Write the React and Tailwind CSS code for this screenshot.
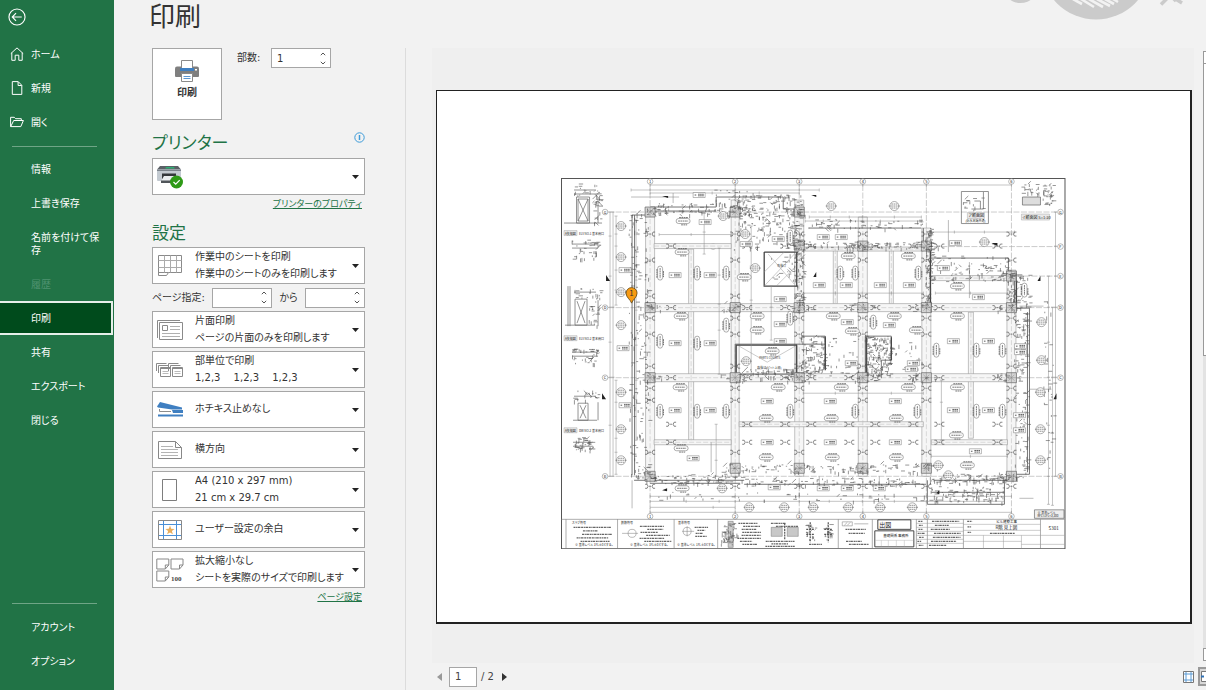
import { useState } from 'react'

const PRIMARY_NAV = [
  { label: 'ホーム', icon: 'home' },
  { label: '新規', icon: 'file' },
  { label: '開く', icon: 'folder' },
]

const SECONDARY_NAV = [
  { label: '情報' },
  { label: '上書き保存' },
  { label: '名前を付けて保存', tall: true },
  { label: '履歴', disabled: true },
  { label: '印刷' },
  { label: '共有' },
  { label: 'エクスポート' },
  { label: '閉じる' },
]

const SETTINGS = [
  { id: 'sides', icon: 'oneSided', title: '片面印刷', note: 'ページの片面のみを印刷します' },
  { id: 'collate', icon: 'collate', title: '部単位で印刷', note: '1,2,3\u3000 1,2,3\u3000 1,2,3' },
  { id: 'staple', icon: 'staple', title: 'ホチキス止めなし' },
  { id: 'orientation', icon: 'landscape', title: '横方向' },
  { id: 'paper', icon: 'paper', title: 'A4 (210 x 297 mm)', note: '21 cm x 29.7 cm' },
  { id: 'margins', icon: 'margins', title: 'ユーザー設定の余白' },
  { id: 'scaling', icon: 'scaling', title: '拡大縮小なし', note: 'シートを実際のサイズで印刷します' },
]

/* ---------- icons ---------- */

function NavIcon({ name }) {
  return (
    <svg width="14" height="14" viewBox="0 0 14 14" fill="none" stroke="white" strokeWidth="1" className="shrink-0">
      {name === 'home' && <path d="M.8 6.6 7 .9l6.200 5.700M1.800 5.800v7.500h3.400V8.200h3.600v5.100h3.400V5.800" />}
      {name === 'file' && <path d="M2.300.6h5.900l3.600 3.700v9.100H2.300zM8.100.8v3.700h3.600" />}
      {name === 'folder' && <path d="M.6 11.600V2.300h3.700l1.300 1.400h5.700v1.800M.7 11.600l3-6.100h9.700l-2.600 6.100z" />}
    </svg>
  )
}

function SheetIcon() {
  return (
    <svg width="26" height="24" viewBox="0 0 26 24" fill="none" stroke="#8a8a8a">
      <path d="M1.500 1.500h23v17h-13l-2 3h-8zM1.500 18.500h10" />
      <path d="M1.500 6.500h23M1.500 13.500h23M7.500 1.500v17M13.500 1.500v17M19.500 1.500v17" stroke="#ababab" />
    </svg>
  )
}

function OneSidedIcon() {
  return (
    <svg width="28" height="22" viewBox="0 0 28 22" fill="none" stroke="#8a8a8a">
      <path d="M1.500 19V1.500H24" />
      <path d="M3.500 3.500h23v17h-23z" fill="white" />
      <path d="M6.500 6.500h5v5h-5z" />
      <path d="M14 7.500h10M14 10.500h10M6 14.500h18M6 17.500h18" stroke="#b0b0b0" />
    </svg>
  )
}

function CollateIcon() {
  return (
    <svg width="28" height="16" viewBox="0 0 28 16" fill="white" stroke="#8a8a8a">
      {[0, 12].map((x) => (
        <g key={x} transform={`translate(${x} 0)`}>
          <path d="M.5 9V1.500h10M2.500 11V3.500h10" fill="none" />
          <path d="M4.500 5.500h10v9h-10z" />
          <path d="M5 6.500h9" />
          <path d="M6.500 9.500h6M6.500 11.500h6" stroke="#bbb" />
        </g>
      ))}
    </svg>
  )
}

function StapleIcon() {
  return (
    <svg width="28" height="18" viewBox="0 0 28 18">
      <path d="M1 5.500 4 1l22 5.500v2H16L2 6.500z" fill="#3f7fc1" />
      <path d="M3.500 8v2.500H15" fill="none" stroke="#8c8c8c" />
      <path d="M16 9h11v3H17z" fill="#3f7fc1" />
      <path d="M2 13.500h25v2H2z" fill="#3f7fc1" />
    </svg>
  )
}

function LandscapeIcon() {
  return (
    <svg width="26" height="20" viewBox="0 0 26 20" fill="none" stroke="#888">
      <path d="M1.500 1.500h17l6 6v11h-23zM18.500 1.500v6h6" />
      <path d="M4 6.500h12M4 9.500h17M4 12.500h17M4 15.500h17" stroke="#b4b4b4" />
    </svg>
  )
}

function PaperIcon() {
  return (
    <svg width="26" height="22" viewBox="0 0 26 22" fill="white" stroke="#7d7d7d">
      <path d="M5.500.5h14v21h-14z" />
    </svg>
  )
}

function MarginsIcon() {
  return (
    <svg width="26" height="22" viewBox="0 0 26 22" fill="none">
      <path d="M1.500 1.500h23v19h-23z" fill="white" stroke="#888" />
      <path d="M6.500 2v18M19.500 2v18M2 5.500h22M2 16.500h22" stroke="#4a8fd6" />
      <path d="m13 6.500 1.200 3.300 3.400.1-2.700 2.100 1 3.300-2.900-1.900-2.900 1.900 1-3.300-2.700-2.100 3.400-.1z" fill="#e9ae5c" />
    </svg>
  )
}

function ScalingIcon() {
  return (
    <svg width="28" height="24" viewBox="0 0 28 24" fill="white" stroke="#888">
      <path d="M.8 1h12v6l-3.500 4H.8zM9.300 11V7h3.500" />
      <path d="M15 1h12v6l-3.500 4H15zM23.500 11V7H27" />
      <path d="M.8 13h12v6l-3.500 4H.8zM9.300 23v-4h3.500" />
      <text x="15" y="22.500" fontSize="7" fontWeight="bold" fill="#444" stroke="none" className="font-['Liberation_Serif',serif]">100</text>
    </svg>
  )
}

function PrinterIcon() {
  return (
    <svg width="24" height="22" viewBox="0 0 24 22">
      <path d="M0 8.500Q0 6.500 2 6.500h20q2 0 2 2V16q0 1-1 1H1q-1 0-1-1z" fill="#7f7f7f" />
      <path d="M6.500.5h11V9h-11z" fill="white" stroke="#8a8a8a" />
      <path d="M5 8h14v3H5z" fill="#3f7fc1" />
      <path d="M6.500 13.500h11v8h-11z" fill="white" stroke="#8a8a8a" />
      <path d="M8.500 16.500h7M8.500 18.500h7" stroke="#5c97d3" />
      <path d="M20 9h2v1.500h-2z" fill="white" />
    </svg>
  )
}

function DeviceIcon() {
  return (
    <svg width="28" height="24" viewBox="0 0 28 24">
      <path d="M4 1h18l3 3.500H1z" fill="#5b6066" />
      <path d="M10 2h8l.8 1.500H9.200z" fill="#2fae73" />
      <path d="M1 4.500h24V15q0 1-1 1H2q-1 0-1-1z" fill="#c3cad1" />
      <path d="M1 4.500h24V6H1z" fill="#7b838b" />
      <path d="M6 8.500h14v6H6z" fill="#33373b" />
      <path d="m8 11-3 5h14l-1-5z" fill="#e9edf0" />
      <path d="M5 15.500h14V18H5z" fill="#50555a" />
      <circle cx="20.500" cy="17" r="6.500" fill="#2f9a17" />
      <path d="m17.500 17 2.200 2.200 4-4" fill="none" stroke="white" strokeWidth="1.200" />
    </svg>
  )
}

const ICONS = {
  sheet: SheetIcon,
  oneSided: OneSidedIcon,
  collate: CollateIcon,
  staple: StapleIcon,
  landscape: LandscapeIcon,
  paper: PaperIcon,
  margins: MarginsIcon,
  scaling: ScalingIcon,
  device: DeviceIcon,
}

/* ---------- form parts ---------- */

function Combo({ id, icon, title, note, label }) {
  const Icon = ICONS[icon]
  return (
    <div className="flex h-[37px] min-w-0 items-center border border-[#a6a6a6] bg-white pr-[5px]">
      <div className="flex w-[34px] shrink-0 justify-center">
        <Icon />
      </div>
      <div className="flex min-w-0 flex-1 flex-col pb-[2px] pl-2">
        <select
          id={id}
          aria-label={label || title}
          className="h-[17px] w-full appearance-none bg-transparent text-[10px] leading-[17px] text-[#333] outline-none"
        >
          <option>{title}</option>
        </select>
        {note && <p className="h-[17px] leading-[17px] whitespace-nowrap">{note}</p>}
      </div>
      <svg width="7" height="4" viewBox="0 0 7 4" className="shrink-0">
        <path d="M0 0h7L3.500 4z" fill="#222" />
      </svg>
    </div>
  )
}

function Spinner({ id, value, onChange, label }) {
  const step = (d) => onChange(String(Math.max(1, (Number(value) || 0) + d)))
  return (
    <div className="flex h-[20px] w-[60px] shrink-0 border border-[#a6a6a6] bg-white">
      <input
        id={id}
        value={value}
        aria-label={label}
        inputMode="numeric"
        onChange={(e) => onChange(e.target.value)}
        className="w-full min-w-0 flex-1 bg-transparent pl-[5px] text-[10px] outline-none"
      />
      <div className="flex w-[14px] flex-col">
        <button aria-label="増やす" onClick={() => step(1)} className="flex flex-1 items-center justify-center">
          <svg width="6" height="4" viewBox="0 0 6 4" fill="none" stroke="#555"><path d="M.8 3.200 3 1l2.200 2.200" /></svg>
        </button>
        <button aria-label="減らす" onClick={() => step(-1)} className="flex flex-1 items-center justify-center">
          <svg width="6" height="4" viewBox="0 0 6 4" fill="none" stroke="#555"><path d="M.8.8 3 3 5.200.8" /></svg>
        </button>
      </div>
    </div>
  )
}

/* ---------- floor plan ---------- */

const AXIS_X = [651, 736, 800, 863.5, 927, 1012]
const AXIS_Y = [['G', 212], ['F', 246.5], ['E', 276], ['D', 307.5], ['C', 377.5], ['B', 476]]

// small fixed-seed generator so the detail marks stay put between renders
function seeded(seed) {
  let s = seed
  return () => {
    s = (s * 16807) % 2147483647
    return s / 2147483647
  }
}

function scatter(x, y, w, h, n, seed) {
  const rnd = seeded(seed)
  let d = ''
  for (let i = 0; i < n; i++) {
    const px = (x + rnd() * w).toFixed(1)
    const py = (y + rnd() * h).toFixed(1)
    const len = (1 + rnd() * 3.5).toFixed(1)
    const k = rnd()
    if (k < 0.5) d += `M${px} ${py}h${len}`
    else if (k < 0.93) d += `M${px} ${py}v${len}`
    else d += `M${px} ${py}l${len} ${k < 0.96 ? len : -len}`
  }
  return d
}

// rows of ruled annotation with uneven line ends
function rows(x, y, w, h, gap, seed) {
  const rnd = seeded(seed)
  let d = ''
  for (let py = y; py < y + h; py += gap) {
    const a = rnd() * w * 0.25
    d += `M${(x + a).toFixed(1)} ${py}h${((w - a) * (0.5 + rnd() * 0.5)).toFixed(1)}`
  }
  return d
}

// dimension line with tick marks
const dimH = (y, xs) => `M${xs[0]} ${y}H${xs[xs.length - 1]}` + xs.map((x) => `M${x} ${y - 1.5}v3`).join('')
const dimV = (x, ys) => `M${x} ${ys[0]}V${ys[ys.length - 1]}` + ys.map((y) => `M${x - 1.5} ${y}h3`).join('')

// [x, y1, y2, half width]
const BEAMS_V = [
  [651, 212, 476, 4.5], [736, 200, 476, 4], [800, 200, 476, 4.5], [863.5, 217, 476, 4.5],
  [927, 228, 476, 4.5], [1012, 270, 476, 4.5],
  [692, 249, 440, 2.5], [836, 249, 304, 2], [892, 249, 304, 2], [971.5, 312, 438, 2.5],
]
// [y, x1, x2, half width]
const BEAMS_H = [
  [307.5, 651, 1012, 4], [377.5, 651, 1012, 4], [246, 655, 732, 2.5], [249, 804, 924, 2],
  [278, 932, 1008, 2.5], [424, 740, 924, 2.5], [442, 655, 732, 2.5], [442, 932, 1008, 2.5],
]

const WALLS = [
  'M651 207H717M651 211H717M717 207v-10H784v12H805',
  'M633 215V475M635.500 215V475M633 215h14M635 480H745M651 483H741',
  'M810 228H922M924 228v18M932 258H1009V272M1015 272V308H1030V474H1012',
  'M745 484H927M928 480v24H1005V480M935 480H1010M932 492H1005',
  'M1028 312V472M736 344V374M736 344H826M797 344V374H738',
  'M826 336V368M802 336H826V342M866 336V378M866 336H892V360H882V378',
]
const HEAVY = [
  'M797.500 252V286M765 252H799M765 252V286H799M931 249V303M737 345V374M797.500 345V374',
  'M736.500 345H798M826 337V370M867 337V376M892 337V360M1017 280V308',
]

const NODES = [
  [651, 212], [736, 212], [800, 212], [800, 245], [863.5, 246], [927, 246], [1012, 276],
  [651, 307.5], [736, 307.5], [800, 307.5], [863.5, 307.5], [927, 307.5], [1012, 307.5],
  [651, 377.5], [736, 377.5], [800, 377.5], [863.5, 377.5], [927, 377.5], [1012, 377.5],
  [651, 476], [736, 468], [800, 468], [863.5, 468], [927, 468], [1012, 476],
]

const TAGS = [
  [706, 222], [676, 275], [711, 275], [676, 343], [711, 343], [676, 410], [711, 410], [694, 458],
  [747, 244], [779, 239], [781, 299], [781, 324], [781, 341], [768, 401], [768, 442],
  [820, 285], [847, 285], [881, 285], [910, 285], [848, 322], [890, 325], [831, 401], [896, 401],
  [831, 442], [896, 442], [979, 297], [954, 341], [989, 341], [954, 410], [989, 410], [976, 451],
  [824, 237], [842, 237], [956, 243], [944, 268], [1021, 346], [1021, 352], [1020, 415], [1020, 430],
  [626, 270], [624, 348], [626, 405], [824, 488], [848, 488], [880, 488], [775, 487], [700, 195],
  [852, 363], [914, 363], [912, 369],
]

const OVALS_H = [
  [684, 221], [683, 252], [682, 316], [681, 387], [682, 448], [683, 488], [745, 277], [758, 316],
  [758, 330], [779, 387], [767, 418], [767, 457], [832, 418], [833, 457], [897, 418], [897, 457],
  [849, 256], [909, 256], [834, 316], [895, 316], [958, 286], [958, 316], [958, 387], [957, 435],
  [968, 465], [842, 387], [909, 387], [773, 351], [917, 330], [853, 331],
]

const OVALS_V = [
  [661, 273], [698, 273], [727, 273], [661, 341], [698, 343], [727, 325], [661, 411], [698, 411],
  [727, 411], [791, 411], [856, 411], [918, 411], [841, 273], [856, 273], [919, 273], [977, 350],
  [1003, 350], [977, 411], [1003, 411], [791, 237], [791, 318], [874, 322], [937, 350], [1025, 290],
]

const RINGS = [
  [622, 226], [622, 257], [622, 292], [622, 325], [622, 392], [622, 429], [622, 460],
  [746, 234], [756, 268], [724, 216], [723, 488], [747, 361], [832, 206], [895, 206], [985, 242],
  [1042, 322], [1042, 360], [1041, 392], [1041, 429], [1041, 460], [939, 465], [949, 475],
  [750, 507], [785, 507], [814, 507], [849, 507], [881, 507], [913, 507],
]

const CLUSTERS = [
  // along the upper walls
  [655, 203, 80, 12, 70], [738, 195, 64, 34, 170], [715, 190, 40, 20, 40], [804, 219, 120, 10, 60], [806, 242, 118, 6, 60],
  [932, 256, 78, 26, 90], [735, 225, 66, 24, 50], [770, 254, 26, 30, 20],
  // left and right edges
  [630, 214, 20, 90, 60], [630, 312, 20, 64, 40], [630, 384, 20, 92, 60], [1008, 272, 22, 36, 70],
  [1014, 312, 16, 62, 70], [1014, 392, 16, 84, 55], [1044, 300, 10, 170, 40],
  // core rooms
  [738, 368, 62, 10, 60], [800, 336, 26, 40, 110], [866, 336, 26, 40, 170], [828, 336, 32, 40, 30], [896, 340, 28, 34, 20],
  [795, 225, 10, 80, 90], [926, 228, 7, 76, 90],
  // bottom edge
  [651, 474, 92, 10, 80], [744, 464, 180, 8, 80], [744, 478, 180, 8, 110], [930, 474, 80, 10, 90], [930, 486, 74, 16, 90], [655, 492, 350, 9, 60],
  // elevation details on the left
  [574, 184, 30, 12, 24], [592, 196, 10, 28, 24], [573, 240, 26, 20, 40], [574, 288, 28, 10, 20], [590, 300, 10, 26, 20],
  [573, 349, 26, 14, 40], [574, 390, 26, 10, 20], [574, 437, 20, 14, 45], [1022, 184, 32, 10, 34], [1042, 194, 12, 12, 20], [963, 198, 22, 12, 14],
]

const JOINTS = BEAMS_V.slice(0, 6).flatMap(([x]) => [234, 260, 296, 318, 334, 366, 388, 400, 452, 486].map((y) => [x, y]))
  .concat([246, 307.5, 377.5, 424, 442].flatMap((y) => [672, 748, 786, 812, 850, 876, 914, 940, 998].map((x) => [x, y])))

const CAPTION_ROWS = [
  [574, 527, 40, 15, 3.5], [640, 526, 34, 16, 3], [695, 527, 14, 10, 3], [738, 523, 26, 22, 3], [770, 523, 30, 4, 3],
  [764, 541, 38, 6, 2.5], [808, 544, 24, 2, 3], [844, 529, 26, 8, 4], [844, 541, 28, 5, 3],
  [929, 521, 34, 26, 4], [918, 521, 8, 26, 4], [967, 521, 6, 14, 5.5], [985, 533, 40, 1, 3],
]

function FloorPlan() {
  return (
    <svg viewBox="562 178 504 371" className="h-auto w-[67%]" fill="none" role="img" aria-label="伏図" fontFamily="'Noto Sans CJK JP', sans-serif">
      <path d="M562.500 178.500H1065.500V548.300H562.500z" stroke="#555" strokeWidth="1" />

      {/* axes */}
      <g stroke="#aaa" strokeWidth=".6" strokeDasharray="6 1.500">
        {AXIS_X.map((x) => <path key={x} d={`M${x} 185V513`} />)}
        {AXIS_Y.map(([n, y]) => <path key={n} d={`M${n === 'F' || n === 'E' ? 927 : 609} ${y}H1058`} />)}
      </g>
      <g stroke="#777" strokeWidth=".5" fill="white">
        {AXIS_X.flatMap((x, i) => [181.5, 516].map((y) => (
          <g key={`${x}-${y}`}>
            <circle cx={x} cy={y} r="2.800" />
            <text x={x} y={y + 1.5} fontSize="4" textAnchor="middle" fill="#222" stroke="none">{i + 1}</text>
          </g>
        )))}
        {AXIS_Y.flatMap(([n, y]) => (n === 'F' ? [714, 1061] : n === 'E' ? [1061] : [606, 1061]).map((x) => (
          <g key={`${n}-${x}`}>
            <circle cx={x} cy={y} r="2.800" />
            <text x={x} y={y + 1.5} fontSize="4" textAnchor="middle" fill="#222" stroke="none">{n}</text>
          </g>
        )))}
      </g>

      {/* beams */}
      <g stroke="#999" strokeWidth=".6" fill="#f6f6f6">
        {BEAMS_V.map(([x, a, b, w]) => <path key={`${x}v`} d={`M${x - w} ${a}V${b}H${x + w}V${a}z`} />)}
        {BEAMS_H.map(([y, a, b, w]) => <path key={`${y}-${a}h`} d={`M${a} ${y - w}H${b}V${y + w}H${a}z`} />)}
      </g>
      <path
        d={BEAMS_V.map(([x, a, b]) => `M${x} ${a}V${b}`).join('') + BEAMS_H.map(([y, a, b]) => `M${a} ${y}H${b}`).join('')}
        stroke="#bbb" strokeWidth=".5" strokeDasharray="5 2"
      />

      {/* walls */}
      <path d={WALLS.join('')} stroke="#666" strokeWidth=".9" />
      <path d={HEAVY.join('')} stroke="#444" strokeWidth="1.300" />
      <path d="M765 286l32-34M765 272l20-20M777 286l20-20M769 254l26 30M740 346l28 16 28-16" stroke="#999" strokeWidth=".5" />
      <g fill="#333" fontSize="3">
        <text x="760" y="359">PARTS COURTS</text>
        <text x="758" y="369">吹抜け(ピット上部)</text>
        <text x="778" y="267">吹抜け</text>
      </g>

      {/* dimensions */}
      <path
        d={[
          dimH(185, AXIS_X), dimH(190, [632, 651, 736, 800, 820]), dimH(193, [651, 713, 736, 760, 800]), dimH(217, [810, 831, 850, 863, 895, 922]),
          dimH(221, [806, 824, 863, 881, 922]), dimH(232, [932, 955, 985, 1015]), dimH(234.5, [660, 692, 732]), dimH(293, [804, 836, 863, 892, 924]),
          dimH(293, [936, 971, 1008]), dimH(393, [804, 836, 863, 892, 924]), dimH(496, AXIS_X), dimH(501, [651, 687, 720, 736, 765, 800, 830, 863, 895, 927, 1005]),
          dimH(507, [651, 714, 736]), dimH(512, AXIS_X), dimH(456, [932, 971, 1008]), dimV(611, [212, 236, 276, 307, 342, 377, 425, 476]),
          dimV(614, [212, 307, 377, 476]), dimV(617, [216, 234, 246, 270, 290, 305]), dimV(617, [380, 402, 438, 452, 474]), dimV(637, [220, 250, 280, 310, 345, 380, 440]),
          dimV(1049, [276, 307, 342, 377, 425, 476, 504]), dimV(1053, [307, 377, 505]), dimV(1056, [212, 246, 276, 307, 377, 476]), dimV(705, [212, 232, 254]),
          dimV(720, [248, 275, 304, 330, 374]), dimV(752, [226, 266, 300, 374]), dimV(772, [286, 307, 340]), dimV(942, [380, 402, 440]), dimV(717, [424, 460, 476]),
        ].join('')}
        stroke="#888" strokeWidth=".5"
      />
      <path d="M632 197h48M674 203v-10M970 262v36M949 220v32M1020 306h24M1030 389h22M633 508v-28M1020 498h14M712 442v30M820 476v12M880 476v12" stroke="#777" strokeWidth=".5" />

      {/* columns */}
      {NODES.map(([x, y]) => (
        <g key={`${x}-${y}`} strokeWidth=".7">
          <path d={`M${x - 5} ${y - 5}h10v10h-10z`} fill="#d4d4d4" stroke="#666" />
          <path d={`M${x - 5} ${y}h10M${x} ${y - 5}v10M${x - 3} ${y - 3}l6 6M${x - 3} ${y + 3}l6-6`} stroke="#888" strokeWidth=".5" />
          <path d={scatter(x - 14, y - 4, 26, 8, 14, Math.round(x * 3 + y))} stroke="#555" strokeWidth=".6" />
        </g>
      ))}

      {/* joint marks */}
      <g stroke="#555" strokeWidth=".7">
        {JOINTS.map(([x, y], i) => (
          <path key={i} d={`M${x - 5} ${y - 2}h2l1 2-1 2h-2M${x + 5} ${y - 2}h-2l-1 2 1 2h2M${x - 1} ${y}h2`} />
        ))}
      </g>

      {/* clusters of small annotation */}
      <g stroke="#505050" strokeWidth=".6">
        {CLUSTERS.map(([x, y, w, h, n], i) => <path key={i} d={scatter(x, y, w, h, n, 9100 + i * 3701)} />)}
      </g>

      {/* member tags */}
      {TAGS.map(([x, y], i) => (
        <g key={i}>
          <path d={`M${x - 6} ${y - 2.5}h12v5h-12z`} fill="white" stroke="#777" strokeWidth=".5" />
          <path d={`M${x - 4.5} ${y}h2M${x - 1} ${y - 0.8}h6M${x - 1} ${y + 0.8}h6`} stroke="#333" strokeWidth=".8" strokeDasharray="1.600 .4" />
        </g>
      ))}
      {OVALS_H.map(([x, y], i) => (
        <g key={i}>
          <rect x={x - 7} y={y - 2.5} width="14" height="5" rx="2.500" fill="white" stroke="#777" strokeWidth=".6" />
          <path d={`M${x - 4} ${y - 3.5}h9M${x - 5} ${y}h10M${x - 2} ${y + 3.8}h6`} stroke="#555" strokeWidth=".8" strokeDasharray="1.800 .5" />
        </g>
      ))}
      {OVALS_V.map(([x, y], i) => (
        <g key={i}>
          <rect x={x - 2.5} y={y - 7} width="5" height="14" rx="2.500" fill="white" stroke="#777" strokeWidth=".6" />
          <path d={`M${x - 3.2} ${y - 4}v9M${x} ${y - 5}v10M${x + 3.4} ${y - 2}v6`} stroke="#555" strokeWidth=".8" strokeDasharray="1.800 .5" />
        </g>
      ))}
      {RINGS.map(([x, y], i) => (
        <g key={i}>
          <circle cx={x} cy={y} r="4.500" fill="white" stroke="#777" strokeWidth=".6" />
          <path d={`M${x - 5.5} ${y}h11M${x - 3} ${y - 2}h6M${x - 3} ${y + 2}h6`} stroke="#666" strokeWidth=".7" strokeDasharray="1.800 .5" />
        </g>
      ))}

      {/* elevation details */}
      <g stroke="#666" strokeWidth=".7">
        <path d="M577.500 197h13v26h-13zM579 199h10v22h-10zM579 199l10 22M589 199l-10 22" />
        <path d="M576 299h12v26h-12zM578 301l8 22M586 301l-8 22M571 286v40M569 286v40M566 325h30" />
        <path d="M579 403h10v17h-10zM581 405l6 13M587 405l-6 13M574 420h24M565 223h38" />
        <path d="M573 244h26M573 248h26M573 352h26M573 356h26M574 442h20M574 446h20" />
        <path d="M962 191.500h27v32h-27zM984 192v17h-12M975 201h6v8" />
        <path d="M1023 197h18v8h-18z" fill="#ddd" />
        <path d="M575 190h22M575 194h22M599 197v26M575 292h22M599 300v26M575 396h22M599 402v18" />
      </g>
      <g fill="#222" fontSize="4">
        <path d="M565 230.500h13v5h-13zM565 335.500h13v5h-13zM565 427.500h13v5h-13zM968 212.500h17v6h-17zM1022 214h28v6h-28z" fill="#e8e8e8" stroke="#999" strokeWidth=".4" />
        <text x="566" y="234.500" fontSize="3">A矢視図</text>
        <text x="580" y="234.500" fontSize="3">ELV NO.1 基本開口</text>
        <text x="566" y="339.500" fontSize="3">A矢視図</text>
        <text x="580" y="339.500" fontSize="3">ELV NO.2 基本開口</text>
        <text x="566" y="431.500" fontSize="3">A矢視図</text>
        <text x="580" y="431.500" fontSize="3">DW NO.2 基本開口</text>
        <text x="969" y="217">ア断面図</text>
        <text x="966" y="222" fontSize="3">(防水天端共通)</text>
        <text x="1022.500" y="218.500">イ断面図 S=1:30</text>
        <path d="M1035 509.500h29.500v8.500H1035z" fill="#eee" stroke="#555" strokeWidth=".6" />
        <text x="1038" y="513.200" fontSize="3">※ 基準レベル</text>
        <text x="1038" y="517" fontSize="3">RFL=1FL+3,200</text>
      </g>
      <path d="M663 196h6v2zM607 275v6h4zM603 393v6h4zM814 277l3-5v5zM992 243h6v3zM1038 281l3-5v5zM1054 399l3-6v6zM663 490l5-2v3zM940 490v4l-3-1zM812 195h5v2z" fill="#222" />

      {/* title block */}
      <path d="M562 519H1065M567 519V548M618.500 519V548M675 519V548M718.500 519V548M839 519V548M873 519V548M917 519V548M928 519V548M964 519V548M1041 519V548" stroke="#777" strokeWidth=".6" />
      <path d="M964 524H1041M964 530H1041M964 535H1065M984 535V548M1004 535V548M1022 535V548M964 541H1022M1022 544H1065M917 523H964M917 527H964M917 531H964M917 535H964M917 539H964M917 543H964" stroke="#999" strokeWidth=".5" />
      <path
        d={CAPTION_ROWS.map(([x, y, w, h, gap], i) => rows(x, y, w, h, gap, 7001 + i * 5303)).join('')}
        stroke="#666" strokeWidth="1.300" strokeDasharray="2 .6 1.200 .5 2.600 .7"
      />
      <path d="M878.500 519.500H911.500V529H878.500zM875.500 530.500H914.500V546.500H875.500z" fill="white" stroke="#333" strokeWidth=".9" />
      <path d="M876 540H914M882 540v6M889 540v6M897 540v6M905 540v6" stroke="#aaa" strokeWidth=".4" />
      <path d="M843 521.500h10v4h-10zM845 525l3-3M848 525l3-3M855 523.500h14" stroke="#777" strokeWidth=".5" />
      <path d="M729 521h5v26h-5z" fill="#ccc" stroke="#666" strokeWidth=".5" />
      <path d="M772 527h11v9h-11zM788 527h11v9h-11z" fill="#c8c8c8" stroke="#777" strokeWidth=".5" />
      <path d="M785.500 523v17M811 522v20M829 522v20M807 529h8M807 534h8M825 529h8M825 534h8" stroke="#555" strokeWidth="1.200" strokeDasharray="2 .8" />
      <path d={scatter(722, 523, 16, 22, 60, 5127) + scatter(806, 523, 10, 17, 20, 9127) + scatter(824, 523, 9, 17, 20, 3127)} stroke="#555" strokeWidth=".6" />
      <path d="M629 533a4 4 0 1 0 8 0 4 4 0 0 0-8 0M623 533h16M684 531a4 4 0 1 0 8 0 4 4 0 0 0-8 0M683 531h12M688 526v10" stroke="#777" strokeWidth=".5" />
      <g fill="#222">
        <text x="880" y="527" fontSize="6">出図</text>
        <text x="884" y="536.500" fontSize="3.500">基礎関係 事務所</text>
        <text x="997" y="523" fontSize="3.500">ビル建築工事</text>
        <text x="996" y="529" fontSize="4.500">R階 見上図</text>
        <text x="1049" y="530" fontSize="4.500">S301</text>
        <text x="573" y="523.500" fontSize="3">スラブ符号</text>
        <text x="622" y="523.500" fontSize="3">鉄筋符号</text>
        <text x="679" y="523.500" fontSize="3">基準符号</text>
        <text x="576" y="546" fontSize="3">※ 基準レベル 1FL±0とする。</text>
        <text x="631" y="546" fontSize="3">※ 基準レベル 1FL±0とする。</text>
        <text x="678" y="546" fontSize="3">※ 基準レベル 1FL±0とする。</text>
      </g>

      {/* location pin */}
      <path d="M632.500 303c-1-3.500-5.500-5.500-5.500-10a5.500 5.500 0 0 1 11 0c0 4.500-4.500 6.500-5.500 10z" fill="#f79a12" stroke="#5e4410" strokeWidth=".8" />
      <text x="632.500" y="296" fontSize="8" textAnchor="middle" fill="#333">1</text>
    </svg>
  )
}

/* ---------- page ---------- */

function Sidebar() {
  const [active, setActive] = useState('印刷')
  return (
    <nav className="flex w-[114px] shrink-0 flex-col bg-[#217346] text-[10px] leading-[13px] text-white">
      <button aria-label="戻る" className="flex h-[37px] items-start pt-2 pl-2">
        <svg width="18" height="18" viewBox="0 0 19 19" fill="none" stroke="white" strokeWidth="1.200">
          <circle cx="9.500" cy="9.500" r="8.500" />
          <path d="M14.500 9.500h-10M8.500 5.500l-4 4 4 4" />
        </svg>
      </button>
      {PRIMARY_NAV.map(({ label, icon }) => (
        <button key={label} className="flex h-[34px] items-center gap-[7px] pl-[10px] text-left">
          <NavIcon name={icon} />
          {label}
        </button>
      ))}
      <hr className="mt-[7px] mr-[17px] mb-[5px] ml-3 border-[#6fa586]" />
      {SECONDARY_NAV.map(({ label, disabled, tall }) => (
        <button
          key={label}
          disabled={disabled}
          onClick={() => setActive(label)}
          className={`flex items-center pr-3 pl-[31px] text-left break-all ${tall ? 'h-[47px]' : 'h-[34px]'} ${disabled ? 'text-[#4f9270]' : ''} ${
            active === label ? 'mr-px border-2 border-l-0 border-[#e6efe9] bg-[#004b1c]' : ''
          }`}
        >
          {label}
        </button>
      ))}
      <div className="mt-auto flex flex-col pb-3">
        <hr className="mr-[17px] mb-[6px] ml-3 border-[#6fa586]" />
        <button className="h-[34px] pl-[31px] text-left">アカウント</button>
        <button className="h-[34px] pl-[31px] text-left">オプション</button>
      </div>
    </nav>
  )
}

function PrintSettings() {
  const [copies, setCopies] = useState('1')
  const [from, setFrom] = useState('')
  const [to, setTo] = useState('')

  return (
    <section className="w-[292px] shrink-0 border-r border-[#dcdcdc] pr-[40px] pl-[38px] text-[10px] text-[#333]">
      <div className="flex">
        <button className="flex h-[72px] w-[70px] flex-col items-center gap-1 border border-[#a6a6a6] bg-white pt-[11px] leading-[14px] font-bold">
          <PrinterIcon />
          印刷
        </button>
        <label htmlFor="copies" className="ml-[15px] w-[34px] leading-[20px]">部数:</label>
        <Spinner id="copies" value={copies} onChange={setCopies} />
      </div>

      <div className="flex h-[38px] items-center justify-between pt-2">
        <h2 className="text-[17px] leading-[24px] text-[#217346]">プリンター</h2>
        <button aria-label="プリンター情報" className="mb-[12px]">
          <svg width="11" height="11" viewBox="0 0 11 11" fill="none" stroke="#3c9bd9">
            <circle cx="5.500" cy="5.500" r="4.700" />
            <path d="M5.500 3v5" strokeWidth="1.500" />
          </svg>
        </button>
      </div>
      <Combo id="printer" icon="device" title="" label="プリンター" />
      <div className="flex h-5 items-center justify-end pr-[3px]">
        <a href="#printer" className="text-[9px] text-[#217346] underline">プリンターのプロパティ</a>
      </div>

      <h2 className="h-8 pt-1 text-[17px] leading-[28px] text-[#217346]">設定</h2>
      <Combo id="target" icon="sheet" title="作業中のシートを印刷" note="作業中のシートのみを印刷します" />
      <div className="flex h-[27px] items-center">
        <label htmlFor="from" className="w-[60px] shrink-0 whitespace-nowrap">ページ指定:</label>
        <Spinner id="from" value={from} onChange={setFrom} />
        <label htmlFor="to" className="flex-1 text-center">から</label>
        <Spinner id="to" value={to} onChange={setTo} />
      </div>
      <div className="flex flex-col gap-[3px]">
        {SETTINGS.map((s) => <Combo key={s.id} {...s} />)}
      </div>
      <div className="flex h-5 items-center justify-end pr-[3px]">
        <a href="#page" className="text-[9px] text-[#217346] underline">ページ設定</a>
      </div>
    </section>
  )
}

function Preview() {
  const [page, setPage] = useState('1')
  return (
    <section className="flex min-w-0 flex-1 flex-col pl-[26px]">
      <div className="flex min-h-0 flex-1">
        <div className="flex min-w-0 flex-1 bg-[#efefef] pt-[42px] pr-[2px] pb-[39px] pl-1">
          <div className="flex flex-1 items-start justify-center border border-r-2 border-b-2 border-[#222] bg-white pt-[87px]">
            <FloorPlan />
          </div>
        </div>
        <div className="mt-[3px] mb-[2px] ml-[9px] flex w-[3px] flex-col overflow-hidden bg-[#e3e3e3]">
          <div className="h-[13px] border border-r-0 border-[#999] bg-white" />
          <div className="h-[292px] border border-t-0 border-r-0 border-[#999] bg-white" />
          <div className="mt-auto h-[13px] border border-r-0 border-[#999] bg-white" />
        </div>
      </div>
      <div className="flex h-[27px] items-center text-[10px] text-[#444]">
        <button aria-label="前のページ" className="w-[17px] pl-[5px]">
          <svg width="5" height="8" viewBox="0 0 5 8"><path d="M5 0v8L0 4z" fill="#999" /></svg>
        </button>
        <input
          aria-label="現在のページ"
          value={page}
          onChange={(e) => setPage(e.target.value)}
          className="h-[20px] w-[28px] border border-[#a6a6a6] bg-white pl-[5px] outline-none"
        />
        <span className="ml-1">/ 2</span>
        <button aria-label="次のページ" className="ml-2">
          <svg width="5" height="8" viewBox="0 0 5 8"><path d="M0 0v8l5-4z" fill="#333" /></svg>
        </button>
        <button aria-label="余白の表示" className="ml-auto">
          <svg width="11" height="12" viewBox="0 0 11 12" fill="white">
            <path d="M.5.5h10v11H.5z" stroke="#777" />
            <path d="M3 1v10M8 1v10M1 3h9M1 9h9" stroke="#5b9bd5" />
          </svg>
        </button>
        <button aria-label="ページに合わせる" className="ml-1 h-[19px] w-2 overflow-hidden border-2 border-r-0 border-[#9a9a9a] bg-[#d8d8d8]">
          <svg width="6" height="15" viewBox="0 0 6 15" fill="white" stroke="#777">
            <path d="M1.500 2.500h8v10h-8z" />
            <path d="M1 7.500h3" stroke="#2f70b5" strokeWidth="2" />
          </svg>
        </button>
      </div>
    </section>
  )
}

function HeaderArt() {
  return (
    <svg width="206" height="24" viewBox="1000 0 206 24" fill="none" stroke="#cbcbcb" aria-hidden="true" className="shrink-0">
      <circle cx="1020.500" cy="-15" r="18" fill="#cbcbcb" stroke="none" />
      <circle cx="1096" cy="-35.500" r="55" fill="#cbcbcb" stroke="none" />
      <path d="M1073-1l9 5M1081-1l13 8M1089-1l14 8M1097-1l13 7M1105-1l9 5M1113-1l5 3" stroke="#f2f2f2" strokeWidth="2.600" />
      <path d="M1161 4.500l6-6M1174-2l8 5M1176 1l-3-3" strokeWidth="3.500" />
    </svg>
  )
}

export default function App() {
  return (
    <div className="flex h-screen min-h-[640px] overflow-hidden bg-[#f2f2f2] font-['DejaVu_Sans','Noto_Sans_CJK_JP',sans-serif] [font-feature-settings:'palt']">
      <Sidebar />
      <main className="flex min-w-0 flex-1 flex-col">
        <header className="flex h-12 shrink-0 items-start justify-between pl-[35px]">
          <h1 className="text-[26px] leading-[34px] text-[#333]">印刷</h1>
          <HeaderArt />
        </header>
        <div className="flex min-h-0 flex-1">
          <PrintSettings />
          <Preview />
        </div>
      </main>
    </div>
  )
}
